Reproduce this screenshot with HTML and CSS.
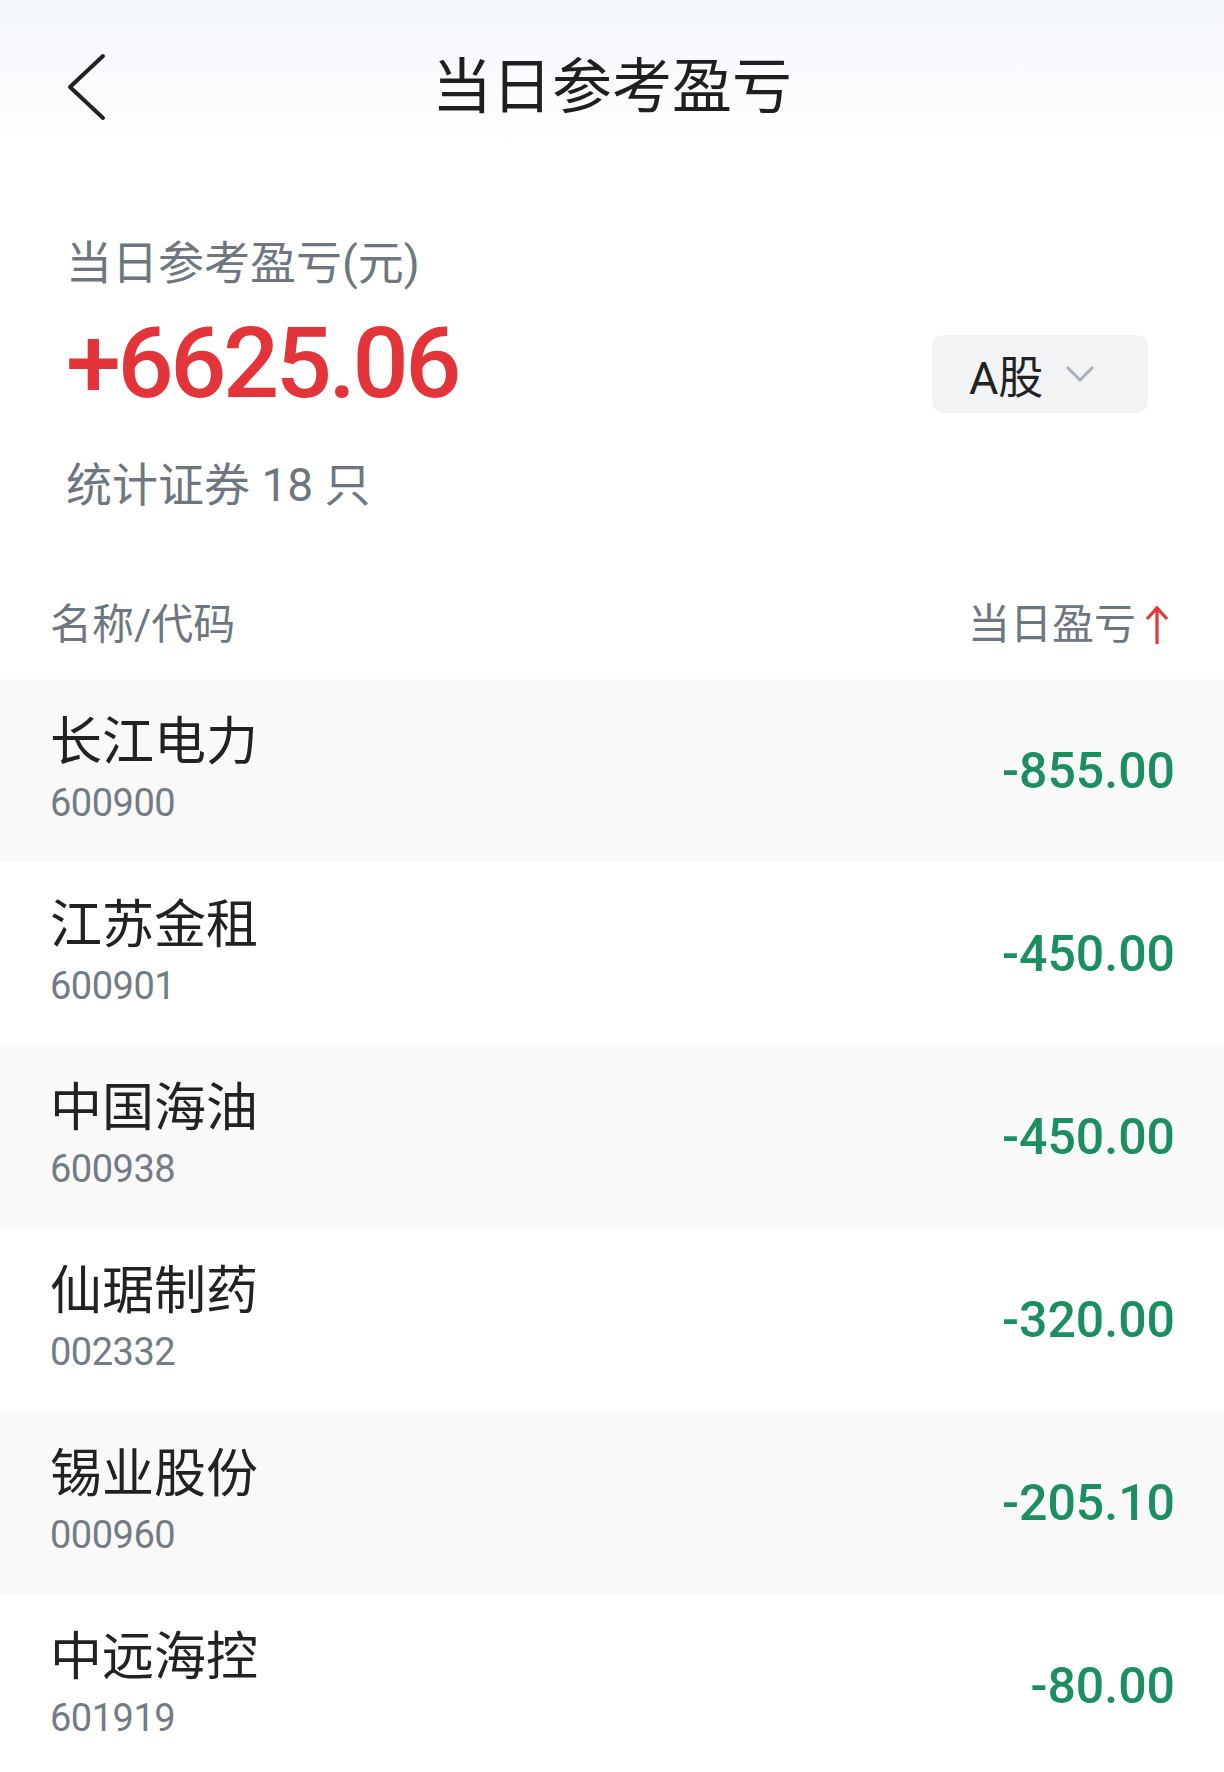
FILE: index.html
```html
<!DOCTYPE html>
<html lang="zh-CN">
<head>
    <meta charset="UTF-8">
    <meta name="viewport" content="width=device-width, initial-scale=1.0">
    <title>当日参考盈亏</title>
    <link rel="stylesheet" href="styles.css">
</head>
<body>

    <header class="nav">
        <button class="back" aria-label="返回">
            <svg width="40" height="70" viewBox="0 0 40 70">
                <path d="M37 3 L4 34 L37 65" fill="none" stroke="#222" stroke-width="4" stroke-linecap="round" stroke-linejoin="round"/>
            </svg>
        </button>
        <h1 class="title">当日参考盈亏</h1>
        <span></span>
    </header>

    <section class="summary">
        <div class="summary-info">
            <div class="summary-label">当日参考盈亏(元)</div>
            <div class="summary-value">+6625.06</div>
            <div class="summary-count">统计证券 18 只</div>
        </div>
        <button class="market">
            <span>A股</span>
            <svg width="30" height="18" viewBox="0 0 30 18">
                <path d="M2 2 L15 15 L28 2" fill="none" stroke="#a8afb7" stroke-width="3"/>
            </svg>
        </button>
    </section>

    <div class="list-head">
        <span>名称/代码</span>
        <span class="sort">当日盈亏
            <svg width="26" height="40" viewBox="0 0 26 40">
                <path d="M13 39 V3 M3 14 L13 3 L23 14" fill="none" stroke="#e0393a" stroke-width="3.2"/>
            </svg>
        </span>
    </div>

    <ul class="stock-list">
        <li class="stock">
            <div class="stock-info">
                <div class="stock-name">长江电力</div>
                <div class="stock-code">600900</div>
            </div>
            <div class="stock-pl down">-855.00</div>
        </li>
        <li class="stock">
            <div class="stock-info">
                <div class="stock-name">江苏金租</div>
                <div class="stock-code">600901</div>
            </div>
            <div class="stock-pl down">-450.00</div>
        </li>
        <li class="stock">
            <div class="stock-info">
                <div class="stock-name">中国海油</div>
                <div class="stock-code">600938</div>
            </div>
            <div class="stock-pl down">-450.00</div>
        </li>
        <li class="stock">
            <div class="stock-info">
                <div class="stock-name">仙琚制药</div>
                <div class="stock-code">002332</div>
            </div>
            <div class="stock-pl down">-320.00</div>
        </li>
        <li class="stock">
            <div class="stock-info">
                <div class="stock-name">锡业股份</div>
                <div class="stock-code">000960</div>
            </div>
            <div class="stock-pl down">-205.10</div>
        </li>
        <li class="stock">
            <div class="stock-info">
                <div class="stock-name">中远海控</div>
                <div class="stock-code">601919</div>
            </div>
            <div class="stock-pl down">-80.00</div>
        </li>
    </ul>

</body>
</html>
```

FILE: styles.css
```css
body {
    font-family: Roboto, "Noto Sans CJK SC", sans-serif;
    background-color: #fff;
    margin: 0;
    padding: 0;
    color: #222;
}

.nav {
    height: 176px;
    display: grid;
    grid-template-columns: 1fr auto 1fr;
    align-items: center;
    background: linear-gradient(#f3f6fb, #fff 85%);
}

.back {
    justify-self: start;
    margin-left: 66px;
    padding: 0;
    border: none;
    background: none;
    display: flex;
}

.title {
    margin: 0;
    font-size: 60px;
    font-weight: 400;
    line-height: 70px;
    color: #1f1f1f;
}

.summary {
    display: flex;
    justify-content: space-between;
    align-items: center;
    padding: 62px 76px 0 66px;
}

.summary-label,
.summary-count {
    font-size: 46px;
    line-height: 50px;
    color: #6e7680;
}

.summary-value {
    margin-top: 25px;
    font-size: 99px;
    font-weight: 500;
    line-height: 100px;
    letter-spacing: -3.5px;
    color: #e3343a;
}

.summary-count {
    margin-top: 47px;
}

.market {
    width: 216px;
    height: 78px;
    display: flex;
    align-items: center;
    gap: 22px;
    padding: 0 0 0 37px;
    border: none;
    border-radius: 12px;
    background-color: #f2f3f5;
    font-family: inherit;
    font-size: 45px;
    color: #222;
}

.list-head {
    display: flex;
    justify-content: space-between;
    align-items: center;
    padding: 90px 54px 29px 50px;
    font-size: 42px;
    line-height: 50px;
    color: #6e7680;
}

.sort {
    display: flex;
    align-items: center;
    gap: 8px;
}

.stock-list {
    list-style: none;
    margin: 0;
    padding: 0;
}

.stock {
    height: 183px;
    display: flex;
    justify-content: space-between;
    align-items: center;
    padding: 0 49px 0 50px;
}

.stock:nth-child(odd) {
    background-color: #f9f9fa;
}

.stock-info {
    padding-bottom: 4px;
}

.stock-name {
    font-size: 52px;
    line-height: 60px;
}

.stock-code {
    margin-top: 8px;
    font-size: 38px;
    line-height: 44px;
    letter-spacing: -0.5px;
    color: #737b85;
}

.stock-pl {
    font-size: 50px;
    font-weight: 500;
}

.stock-pl.down {
    color: #1b8f5f;
}
```
